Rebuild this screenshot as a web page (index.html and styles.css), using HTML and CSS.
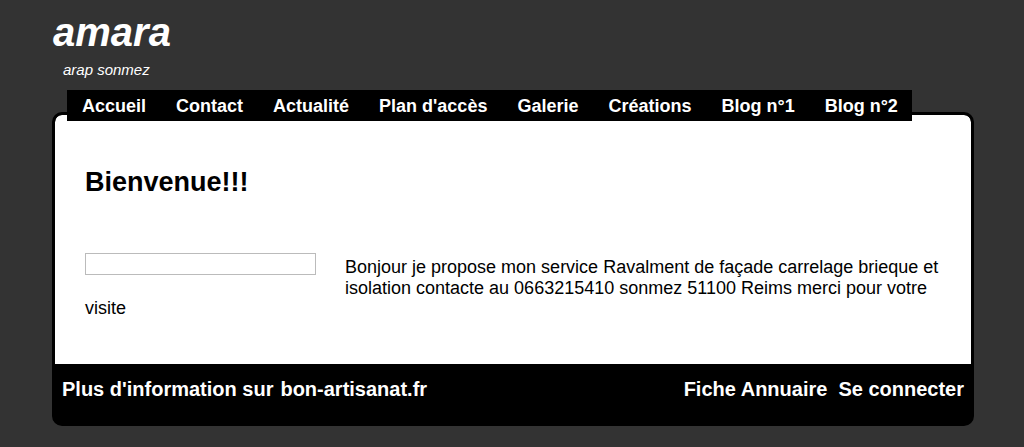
FILE: index.html
```html
<!DOCTYPE html>
<html lang="fr">
    <head>
        <meta charset="UTF-8" />
        <meta name="viewport" content="width=device-width, initial-scale=1.0" />
        <title>amara</title>
        <link rel="stylesheet" href="styles.css">
    </head>
    <body>
        <div id="page">
            <header>
                <h1 class="siteTitle">amara</h1>
                <p class="siteSub">arap sonmez</p>
            </header>
            <nav id="menu">
                <a href="#">Accueil</a>
                <a href="#">Contact</a>
                <a href="#">Actualité</a>
                <a href="#">Plan d'accès</a>
                <a href="#">Galerie</a>
                <a href="#">Créations</a>
                <a href="#">Blog n°1</a>
                <a href="#">Blog n°2</a>
            </nav>
            <div id="box">
                <main class="content">
                    <h2>Bienvenue!!!</h2>
                    <div class="cols">
                        <div class="leftCol">
                            <input type="text" />
                            <p>visite</p>
                        </div>
                        <p class="intro">
                            Bonjour je propose mon service Ravalment de façade carrelage brieque et
                            isolation contacte au 0663215410 sonmez 51100 Reims merci pour votre
                        </p>
                    </div>
                </main>
                <footer>
                    <div class="links">
                        <a href="#">Plus d'information sur</a>
                        <a href="#">bon-artisanat.fr</a>
                    </div>
                    <div class="links right">
                        <a href="#">Fiche Annuaire</a>
                        <a href="#">Se connecter</a>
                    </div>
                </footer>
            </div>
        </div>
    </body>
</html>
```

FILE: styles.css
```css
* {
    margin: 0;
    padding: 0;
    box-sizing: border-box;
}
html,
body {
    width: 100%;
    height: 100%;
    background-color: #333333;
    font-family: "Liberation Sans", Arial, sans-serif;
}
a {
    color: inherit;
    text-decoration: none;
}
#page {
    width: 922px;
    margin-left: 52px;
}
header {
    padding-top: 9px;
    color: white;
    .siteTitle {
        padding-left: 1px;
        font-size: 40px;
        font-style: italic;
        font-weight: bold;
        line-height: 46px;
    }
    .siteSub {
        margin-top: 6px;
        padding-left: 11px;
        font-size: 15px;
        font-style: italic;
        line-height: 17px;
    }
}
#menu {
    position: relative;
    z-index: 1;
    display: flex;
    width: 845px;
    height: 31px;
    margin: 12px 0 -9px 15px;
    padding: 2px 0 0 15px;
    gap: 30px;
    background-color: black;
    color: white;
    font-size: 18px;
    font-weight: bold;
    line-height: 29px;
}
#box {
    border: 3px solid black;
    border-radius: 10px;
    background-color: black;
    overflow: hidden;
}
.content {
    background-color: white;
    padding: 52px 30px 45px;
    color: black;
    border-radius: 7px 7px 0 0;
    h2 {
        font-size: 27px;
        line-height: 31px;
        margin-bottom: 55px;
    }
}
.cols {
    display: flex;
    gap: 29px;
    font-size: 18px;
    line-height: 21px;
}
.leftCol {
    width: 231px;
    flex-shrink: 0;
    input {
        display: block;
        width: 231px;
        height: 22px;
        border: 1px solid #bbbbbb;
        margin-bottom: 23px;
    }
}
.intro {
    padding-top: 4px;
}
footer {
    display: flex;
    justify-content: space-between;
    padding: 14px 7px 22px;
    color: white;
    font-size: 20px;
    font-weight: bold;
    line-height: 23px;
    .links {
        display: flex;
        gap: 7px;
    }
    .right {
        gap: 11px;
    }
}
```
